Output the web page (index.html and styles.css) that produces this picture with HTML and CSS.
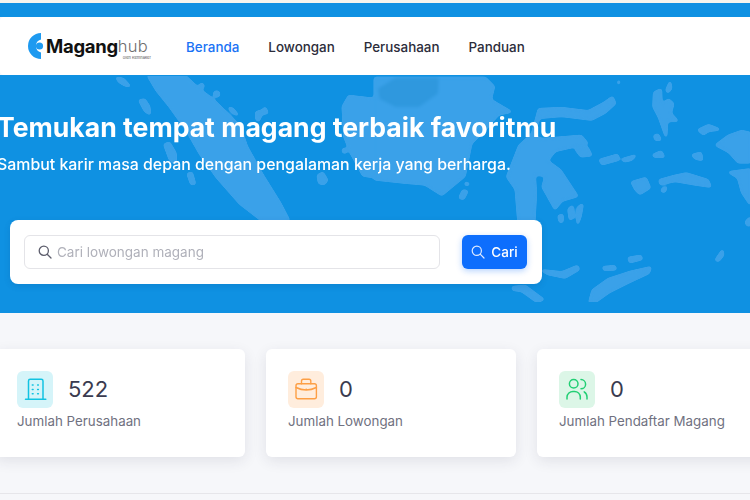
FILE: index.html
```html
<!DOCTYPE html>
<html lang="id">
<head>
<meta charset="utf-8">
<title>Maganghub</title>
<link rel="stylesheet" href="styles.css">
</head>
<body>
<div class="topbar"><div class="topstrip"></div></div>
<header class="nav">
  <a class="logo" href="#">
    <svg class="logo-mark" width="19" height="26" viewBox="0 0 19 26">
      <path d="M14 0 A13 13 0 0 0 14 26 L14 19.5 A6.7 6.7 0 0 1 14 6.5 Z" fill="#1e9af0"/>
      <circle cx="12.5" cy="13" r="3.6" fill="#1e9af0"/>
    </svg>
    <span class="logo-main">Magang</span><span class="logo-hub">hub<small class="logo-sub">oleh Kemnaker</small></span>
  </a>
  <nav class="links">
    <a class="link active" href="#">Beranda</a>
    <a class="link" href="#">Lowongan</a>
    <a class="link" href="#">Perusahaan</a>
    <a class="link" href="#">Panduan</a>
  </nav>
</header>
<section class="hero">
  <svg class="map" viewBox="0 75 750 238" width="750" height="238" aria-hidden="true">
    <defs>
      <filter id="organic" x="0" y="0" width="100%" height="100%" color-interpolation-filters="sRGB">
        <feGaussianBlur stdDeviation="1.6"/>
        <feColorMatrix type="matrix" values="1 0 0 0 0  0 1 0 0 0  0 0 1 0 0  0 0 0 6 -2.4"/>
      </filter>
    </defs>
    <g filter="url(#organic)">
    <g transform="translate(0,70) scale(0.3333)" fill="#3aa1e9" stroke="#3aa1e9" stroke-width="9" stroke-linejoin="round">
      <path d="M445 18 L555 18 L600 60 L640 90 L690 140 L720 170 L740 230 L790 320 L840 400 L866 450 L785 450 L720 400 L650 320 L600 250 L560 180 L510 110 L470 60Z"/>
      <path d="M351 24 L370 28 L388 48 L375 45 L358 35Z"/>
      <path d="M419 92 L433 89 L447 110 L449 131 L435 122Z"/>
      <path d="M494 224 L508 219 L526 250 L526 281 L510 268Z"/>
      <path d="M564 312 L575 309 L584 341 L574 341Z"/>
      <circle cx="650" cy="72" r="7"/>
      <circle cx="605" cy="48" r="5"/>
      <path d="M688 114 L698 117 L712 134 L700 128Z"/>
      <path d="M769 127 L788 122 L795 114 L802 128 L785 131 L776 151 L770 148Z"/>
      <path d="M954 317 L968 309 L981 330 L973 341 L958 339Z"/>
      <circle cx="1034" cy="242" r="5"/>
      <path d="M1029 110 L1047 79 L1125 88 L1125 321 L1090 316 L1054 250 L1034 200Z"/>
    </g>
    <g transform="translate(375,70) scale(0.3333)" fill="#3aa1e9" stroke="#3aa1e9" stroke-width="9" stroke-linejoin="round">
      <path d="M0 24 L330 24 L356 50 L346 90 L406 125 L370 132 L330 178 L288 220 L268 318 L200 374 L150 342 L90 337 L0 327Z"/>
      <path d="M264 362 L276 364 L265 386 L254 383Z"/>
      <path d="M273 338 L281 342 L277 345 L271 343Z"/>
      <path d="M492 118 L560 115 L640 125 L690 98 L712 82 L720 100 L690 127 L650 148 L560 137 L492 143 L474 198 L500 208 L618 198 L636 220 L540 242 L516 272 L556 302 L606 378 L560 391 L540 416 L503 350 L513 317 L478 312 L482 370 L477 456 L431 456 L423 358 L397 320 L433 228 L472 192Z"/>
      <path d="M603 238 L637 233 L648 255 L618 258Z"/>
      <path d="M551 438 L562 435 L562 455 L555 455Z"/>
      <path d="M581 418 L592 409 L595 442 L585 447Z"/>
      <path d="M609 413 L622 404 L616 438 L608 460Z"/>
      <path d="M675 270 L727 255 L731 268 L682 282Z"/>
      <path d="M743 268 L780 257 L768 269 L748 273Z"/>
      <path d="M835 255 L858 245 L866 260 L838 259Z"/>
      <path d="M953 255 L977 249 L981 269 L962 265Z"/>
      <path d="M838 68 L857 59 L859 108 L880 89 L894 101 L886 130 L906 152 L875 152 L873 198 L852 140 L836 110Z"/>
      <path d="M875 60 L885 37 L888 55 L878 66Z"/>
      <path d="M838 197 L848 194 L856 209 L842 209Z"/>
      <path d="M971 180 L1000 166 L1031 178 L1000 182 L985 192Z"/>
      <path d="M1024 225 L1060 198 L1100 184 L1125 189 L1125 276 L1090 276 L1062 245Z"/>
      <path d="M1064 307 L1125 299 L1125 401 L1102 367 L1090 323Z"/>
      <path d="M854 331 L900 318 L935 311 L998 331 L1006 349 L960 342 L900 332 L857 342Z"/>
      <path d="M862 357 L874 353 L868 365 L860 363Z"/>
      <path d="M771 337 L812 325 L824 353 L795 371 L782 358Z"/>
      <path d="M1113 456 L1125 444 L1125 465 L1117 465Z"/>
      <path d="M1023 570 L1042 542 L1044 555 L1030 572Z"/>
      <path d="M644 696 L653 662 L700 628 L760 608 L826 593 L821 608 L760 637 L700 667 L660 696Z"/>
      <path d="M761 564 L797 558 L800 567 L765 576Z"/>
      <path d="M685 592 L719 589 L722 597 L688 599Z"/>
      <path d="M413 652 L450 648 L490 678 L504 688 L485 694 L440 662 L415 659Z"/>
      <path d="M503 602 L560 608 L607 589 L611 598 L570 622 L520 612Z"/>
      <path d="M730 33 L733 35 L731 41 L730 40Z"/>
      <path d="M14 58 L62 29 L186 29 L184 68 L130 106 L62 106 L18 83Z" fill="#2f98de" stroke="#2f98de"/>
    </g>
    </g>
  </svg>
  <div class="hero-text">
    <h1 class="title">Temukan tempat magang terbaik favoritmu</h1>
    <p class="subtitle">Sambut karir masa depan dengan pengalaman kerja yang berharga.</p>
  </div>
  <form class="search">
    <label class="field">
      <svg class="field-icon" width="14" height="14" viewBox="0 0 14 14" fill="none" stroke="#5c5d6c" stroke-width="1.3" stroke-linecap="round"><circle cx="5.8" cy="5.8" r="4.6"/><path d="M9.2 9.2 L13 13"/></svg>
      <span class="placeholder">Cari lowongan magang</span>
    </label>
    <button class="btn" type="button">
      <svg width="14" height="14" viewBox="0 0 14 14" fill="none" stroke="#dfeaff" stroke-width="1.2" stroke-linecap="round"><circle cx="5.8" cy="5.8" r="4.6"/><path d="M9.2 9.2 L13 13"/></svg>
      <span>Cari</span>
    </button>
  </form>
</section>
<section class="stats">
  <article class="card">
    <div class="card-top">
      <div class="ico ico-cyan">
        <svg width="37" height="37" viewBox="0 0 37 37" fill="none" stroke="#12c3e2" stroke-width="1.5" stroke-linecap="round" stroke-linejoin="round"><path d="M11.5 28 V10 Q11.5 8.3 13.2 8.3 H24.3 Q26 8.3 26 10 V28"/><path d="M8.5 28.2 H28.8"/><path d="M15.3 14 h.8 M20.6 14 h.8 M15.3 18.4 h.8 M20.6 18.4 h.8 M15.3 22.8 h.8 M20.6 22.8 h.8" stroke-width="1.5"/></svg>
      </div>
      <span class="num">522</span>
    </div>
    <p class="label">Jumlah Perusahaan</p>
  </article>
  <article class="card">
    <div class="card-top">
      <div class="ico ico-orange">
        <svg width="37" height="37" viewBox="0 0 37 37" fill="none" stroke="#fd9f45" stroke-width="1.4" stroke-linecap="round" stroke-linejoin="round"><rect x="8" y="12.7" width="20.4" height="15" rx="2"/><path d="M13.5 12.7 V10 Q13.5 8.2 15.3 8.2 H21 Q22.8 8.2 22.8 10 V12.7"/><path d="M8 16.5 Q13 19 18.2 19 Q23.4 19 28.4 16.5"/><path d="M18.1 18.3 h.2" stroke-width="1.5"/></svg>
      </div>
      <span class="num">0</span>
    </div>
    <p class="label">Jumlah Lowongan</p>
  </article>
  <article class="card">
    <div class="card-top">
      <div class="ico ico-green">
        <svg width="37" height="37" viewBox="0 0 37 37" fill="none" stroke="#22cf74" stroke-width="1.5" stroke-linecap="round" stroke-linejoin="round"><circle cx="14.7" cy="12.7" r="4.3"/><path d="M22 8.6 A4.6 4.6 0 0 1 22 17.8"/><path d="M8 28 V26 A6 6 0 0 1 14 20.4 H15.5 A6 6 0 0 1 21.3 26 V28"/><path d="M25.2 20.9 A6 6 0 0 1 28 26 V28"/></svg>
      </div>
      <span class="num">0</span>
    </div>
    <p class="label">Jumlah Pendaftar Magang</p>
  </article>
</section>
<div class="rule"></div>
</body>
</html>
```
FILE: styles.css
```css
* { box-sizing: border-box; }
html, body { margin: 0; padding: 0; }
body {
  width: 750px;
  height: 500px;
  overflow: hidden;
  background: #f6f7fa;
  font-family: "Inter", "Liberation Sans", sans-serif;
  color: #3a3b4f;
}
.topbar { height: 17px; background: #0f91e2; }
.topstrip { height: 3px; background: #f4f5ee; }
.nav {
  height: 58px;
  background: #fff;
  border-radius: 4px 0 0 4px;
  display: flex;
  align-items: center;
  padding-left: 27px;
}
.logo {
  display: flex;
  align-items: center;
  width: 159px;
  margin-top: -1px;
  text-decoration: none;
}
.logo-mark { flex: none; margin-top: 1px; }
.logo-main { font-size: 18.5px; font-weight: 700; color: #111; letter-spacing: -0.3px; }
.logo-hub { position: relative; font-size: 16.5px; font-weight: 300; color: #6e6e6e; letter-spacing: 0.2px; }
.logo-sub {
  position: absolute;
  left: 5px;
  top: 19px;
  font-size: 4px;
  font-weight: 400;
  letter-spacing: 0;
  white-space: nowrap;
  color: #555;
}
.links { display: flex; gap: 29px; margin-top: 2px; }
.link { font-size: 13.4px; font-weight: 500; color: #2b2c3a; text-decoration: none; }
.link.active { color: #1a73f5; }
.hero {
  position: relative;
  height: 238px;
  background: #0f91e2;
  padding-top: 35px;
  overflow: hidden;
}
.map { position: absolute; left: 0; top: 0; }
.hero-text { position: relative; margin-left: -3px; }
.title { margin: 0; font-size: 26.6px; line-height: 34px; font-weight: 700; color: #fff; }
.subtitle { margin: 9px 0 0; font-size: 15.9px; line-height: 24px; font-weight: 500; color: #fff; }
.search {
  position: relative;
  margin: 43px 0 0 10px;
  width: 532px;
  height: 64px;
  background: #fff;
  border-radius: 8px;
  box-shadow: 0 2px 6px rgba(10, 60, 120, .15);
  display: flex;
  align-items: center;
  padding: 0 15px 0 14px;
  gap: 22px;
}
.field {
  flex: 1;
  height: 34px;
  border: 1px solid #e4e4e8;
  border-radius: 6px;
  display: flex;
  align-items: center;
  padding-left: 13px;
  gap: 5px;
}
.placeholder { font-size: 13.5px; color: #b0b1ba; }
.btn {
  width: 65px;
  height: 34px;
  border: 0;
  border-radius: 6px;
  background: #0d6efd;
  color: #fff;
  font: 500 13.5px "Inter", "Liberation Sans", sans-serif;
  display: flex;
  align-items: center;
  justify-content: center;
  gap: 6px;
  padding: 0;
  box-shadow: 0 2px 6px rgba(13, 110, 253, .3);
}
.stats {
  display: flex;
  gap: 21px;
  margin: 36px 0 0 -5px;
}
.card {
  flex: none;
  width: 250px;
  height: 108px;
  background: #fff;
  border-radius: 6px;
  box-shadow: 0 4px 14px rgba(40, 40, 70, .10);
  padding: 22px 22px;
}
.card-top { display: flex; align-items: center; gap: 15px; }
.ico { width: 36px; height: 37px; border-radius: 6px; overflow: hidden; }
.ico svg { display: block; }
.ico-cyan { background: #d5f4f9; }
.ico-orange { background: #ffeddd; }
.ico-green { background: #dcf6e7; }
.num { font-size: 22px; font-weight: 400; color: #3a3b4f; margin-top: -2px; }
.label { margin: 5px 0 0; font-size: 13.35px; line-height: 17px; color: #70717f; }
.rule { height: 1px; margin-top: 36px; background: #e6e6ea; }
```
